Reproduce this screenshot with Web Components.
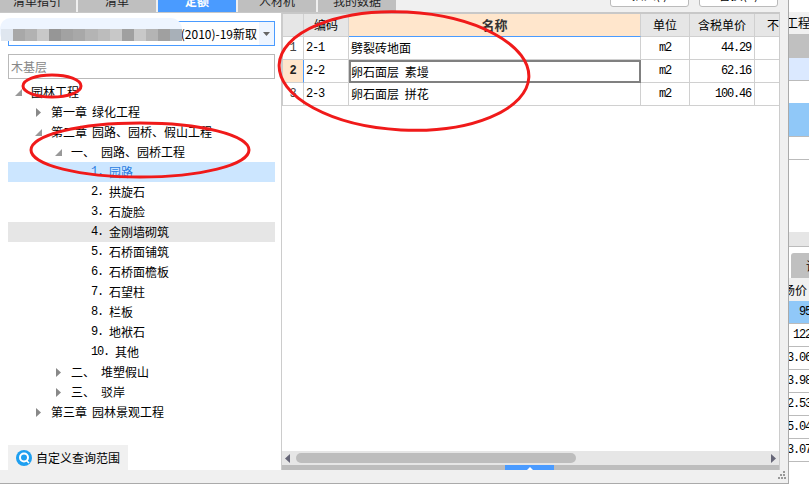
<!DOCTYPE html>
<html lang="zh">
<head>
<meta charset="utf-8">
<title>定额查询</title>
<style>
  html, body { margin: 0; height: 492px; overflow: hidden; background: #fff; }
  body { font: 12px "Noto Sans CJK SC", "Liberation Sans", sans-serif; color: #000; }
</style>
</head>
<body>
<ui-app>
  <ui-topbar slot="top"></ui-topbar>
  <ui-sidebar slot="left">
    <ui-tree-row depth="0" arrow="open">园林工程</ui-tree-row>
    <ui-tree-row depth="1" arrow="closed" num="第一章" w="41">绿化工程</ui-tree-row>
    <ui-tree-row depth="1" arrow="open" num="第二章" w="41">园路、园桥、假山工程</ui-tree-row>
    <ui-tree-row depth="2" arrow="open" num="一、" w="30">园路、园桥工程</ui-tree-row>
    <ui-tree-row depth="3" num="1." w="18" state="selected">园路</ui-tree-row>
    <ui-tree-row depth="3" num="2." w="18">拱旋石</ui-tree-row>
    <ui-tree-row depth="3" num="3." w="18">石旋脸</ui-tree-row>
    <ui-tree-row depth="3" num="4." w="18" state="hover">金刚墙砌筑</ui-tree-row>
    <ui-tree-row depth="3" num="5." w="18">石桥面铺筑</ui-tree-row>
    <ui-tree-row depth="3" num="6." w="18">石桥面檐板</ui-tree-row>
    <ui-tree-row depth="3" num="7." w="18">石望柱</ui-tree-row>
    <ui-tree-row depth="3" num="8." w="18">栏板</ui-tree-row>
    <ui-tree-row depth="3" num="9." w="18">地袱石</ui-tree-row>
    <ui-tree-row depth="3" num="10." w="24">其他</ui-tree-row>
    <ui-tree-row depth="2" arrow="closed" num="二、" w="30">堆塑假山</ui-tree-row>
    <ui-tree-row depth="2" arrow="closed" num="三、" w="30">驳岸</ui-tree-row>
    <ui-tree-row depth="1" arrow="closed" num="第三章" w="41">园林景观工程</ui-tree-row>
  </ui-sidebar>
  <ui-grid slot="right"></ui-grid>
  <ui-sidepanel slot="side"></ui-sidepanel>
</ui-app>
<ui-annotations></ui-annotations>

<script>
const mono = '"Liberation Mono", monospace';

class UiApp extends HTMLElement {
  constructor() {
    super();
    this.attachShadow({mode: 'open'}).innerHTML = `
    <style>
      :host { display: flex; width: 809px; height: 492px; overflow: hidden; }
      .win { width: 789px; height: 484px; display: flex; flex-direction: column; flex: none;
             background: #f0f0f0; border-bottom: 1px solid #aaa; border-right: 1px solid #aaa; box-sizing: border-box; }
      .work { height: 458px; display: flex; flex: none; }
      .status { flex: 1; position: relative; }
      .grip { position: absolute; right: 2px; top: 1px; width: 8px; height: 8px; }
      .side { flex: 1; min-width: 0; }
    </style>
    <div class="win">
      <slot name="top"></slot>
      <div class="work"><slot name="left"></slot><slot name="right"></slot></div>
      <div class="status">
        <svg class="grip" viewBox="0 0 8 8" fill="#999">
          <rect x="5" y="0" width="2" height="2"/><rect x="2" y="3" width="2" height="2"/><rect x="5" y="3" width="2" height="2"/>
          <rect x="0" y="6" width="2" height="2"/><rect x="3" y="6" width="2" height="2"/><rect x="6" y="6" width="2" height="2"/>
        </svg>
      </div>
    </div>
    <div class="side"><slot name="side"></slot></div>`;
  }
}

class UiTopbar extends HTMLElement {
  constructor() {
    super();
    const tabs = ['清单指引', '清单', '定额', '人材机', '我的数据'];
    this.attachShadow({mode: 'open'}).innerHTML = `
    <style>
      :host { display: flex; height: 12px; flex: none; overflow: hidden; align-items: flex-end; background: #f0f0f0; font-size: 12px; }
      .tabs { display: flex; gap: 2px; margin-left: -2px; align-items: flex-end; }
      .tab { width: 78px; height: 21px; line-height: 20px; text-align: center; background: #bfbfbf; color: #222; flex: none; }
      .tab.on { background: #4a9bff; color: #fff; font-weight: bold; }
      .btns { margin-left: auto; margin-right: 10px; display: flex; gap: 10px; align-self: flex-start; }
      .btn { width: 79px; height: 22px; margin-top: -15px; box-sizing: border-box; background: #fff; border: 1px solid #bbb;
             border-radius: 3px; text-align: center; line-height: 18px; font-size: 12px; }
    </style>
    <div class="tabs">${tabs.map((t, i) => `<div class="tab${i == 2 ? ' on' : ''}">${t}</div>`).join('')}</div>
    <div class="btns"><div class="btn">插入(I)</div><div class="btn">替换(R)</div></div>`;
  }
}

class UiSidebar extends HTMLElement {
  constructor() {
    super();
    this.attachShadow({mode: 'open'}).innerHTML = `
    <style>
      :host { display: flex; flex-direction: column; width: 282px; height: 458px; flex: none; box-sizing: border-box;
              background: #fff; border-right: 1px solid #ccc; border-top: 1px solid #c8c8c8; padding: 8px 6px 0 8px; position: relative; }
      .select { height: 25px; box-sizing: border-box; border: 1px solid #4a9bff; display: flex; flex: none; }
      .select .val { flex: 1; text-align: right; line-height: 23px; padding-right: 2px; white-space: nowrap; }
      .select .drop { width: 15px; background: #eef5ff; display: flex; align-items: center; justify-content: center; }
      .search { height: 25px; margin-top: 8px; flex: none; box-sizing: border-box; border: 1px solid #b9b9b9; line-height: 23px; padding-left: 2px; color: #888; }
      .tree { margin-top: 3px; flex: 1; display: flex; flex-direction: column; }
      .query { width: 120px; height: 25px; flex: none; background: #f0f0f0; display: flex; align-items: center; gap: 4px; padding-left: 8px; box-sizing: border-box; }
      .mask { position: absolute; left: 0; top: 5px; width: 182px; height: 23px; background: #eef5ff; border-radius: 11px 12px 12px 8px;
              display: flex; align-items: flex-end; padding-left: 1px; box-sizing: border-box; }
      .mask i { display: block; height: 12px; flex: 1; }
    </style>
    <div class="select"><div class="val">(2010)-19新取</div>
      <div class="drop"><svg width="7" height="4" viewBox="0 0 7 4"><path d="M0 0h7L3.5 4z" fill="#666"/></svg></div></div>
    <div class="search">木基层</div>
    <div class="tree"><slot></slot></div>
    <div class="query">
      <svg width="16" height="16" viewBox="0 0 16 16"><circle cx="8" cy="8" r="8" fill="#1e9ff0"/><circle cx="8" cy="7.5" r="4" fill="none" stroke="#fff" stroke-width="2"/><path d="M10.5 10.5L13 13" stroke="#fff" stroke-width="1.5"/></svg>
      <span>自定义查询范围</span>
    </div>
    <div class="mask">${['#dfe6ef','#a8a8a8','#b2b2b2','#c8c8c8','#969696','#a2a2a2','#a8a8a8','#b4b4b4','#bcbcbc','#c8c8c8','#a0a0a0','#c8c8c8','#b4b4b4','#a0a0a0','#a8b0b8']
      .map(c => `<i style="background:${c}"></i>`).join('')}</div>`;
  }
}

class UiTreeRow extends HTMLElement {
  constructor() {
    super();
    const depth = +this.getAttribute('depth');
    const arrow = this.getAttribute('arrow');
    const num = this.getAttribute('num');
    const w = this.getAttribute('w') || 0;
    const isDigit = num && /^\d/.test(num);
    const icon = arrow == 'open'
      ? '<path d="M7 1v7H0z" fill="#999"/>'
      : arrow == 'closed' ? '<path d="M1 0l5 4.5L1 9z" fill="#888"/>' : '';
    this.attachShadow({mode: 'open'}).innerHTML = `
    <style>
      :host { display: flex; height: 20px; line-height: 20px; flex: none; align-items: center; white-space: nowrap; padding-left: ${7 + depth * 20}px; }
      :host([state=selected]) { background: #cce6ff; color: #2a7de1; }
      :host([state=hover]) { background: #e6e6e6; }
      svg { width: 7px; height: 9px; flex: none; margin-right: 9px; }
      .num { flex: none; width: ${w}px; ${isDigit ? `font: 12px ${mono}; letter-spacing: -1.2px;` : ''} }
    </style>
    <svg viewBox="0 0 7 9">${icon}</svg>${num ? `<span class="num">${num}</span>` : ''}<slot></slot>`;
  }
}

class UiGrid extends HTMLElement {
  constructor() {
    super();
    const rows = [
      ['1', '2-1', '劈裂砖地面', 'm2', '44.29'],
      ['2', '2-2', '卵石面层 素墁', 'm2', '62.16'],
      ['3', '2-3', '卵石面层 拼花', 'm2', '100.46'],
    ];
    const body = rows.map((r, i) => `
      <div class="c num ${i == 1 ? 'cur' : ''}">${r[0]}</div>
      <div class="c code">${r[1]}</div>
      <div class="c name ${i == 1 ? 'edit' : ''}">${r[2]}</div>
      <div class="c mid">${r[3]}</div>
      <div class="c price">${r[4]}</div>
      <div class="c last"></div>`).join('');
    this.attachShadow({mode: 'open'}).innerHTML = `
    <style>
      :host { display: flex; flex-direction: column; width: 497px; flex: none; background: #fff;
              border-top: 2px solid #c8c8c8; height: 456px; border-right: 1px solid #ccc; }
      .view { flex: 1; overflow: hidden; }
      .table { display: grid; grid-template-columns: 21px 45px 292px 49px 65px 24px; grid-auto-rows: 23px; border-left: 1px solid #ccc; width: 496px; }
      .h { background: #e6e6e6; border-right: 1px solid #d0d0d0; border-bottom: 1px solid #d0d0d0; text-align: center; line-height: 22px; overflow: hidden; white-space: nowrap; }
      .h.on { background: #ffe6cc; border-bottom-color: #4a9bff; font-weight: bold; font-size: 13px; color: #333; }
      .h.clip { border-right: 0; text-align: left; padding-left: 12px; }
      .c { border-right: 1px solid #d0d0d0; border-bottom: 1px solid #d0d0d0; line-height: 22px; white-space: pre; box-sizing: border-box; }
      .c.last { border-right: 0; }
      .num { text-align: center; font: 12px/22px ${mono}; color: #444; }
      .num.cur { background: #ffe6cc; color: #222; font-weight: bold; border-right: 1px solid #4a9bff; }
      .code { padding-left: 2px; font: 12px/22px ${mono}; letter-spacing: -1.2px; }
      .name { padding-left: 2px; word-spacing: 3px; }
      .edit { border: 2px solid #808080; line-height: 19px; padding-left: 0; }
      .mid { text-align: center; font: 12px/22px ${mono}; letter-spacing: -1.2px; }
      .price { text-align: right; padding-right: 3px; font: 12px/22px ${mono}; letter-spacing: -1.2px; }
      .bar { height: 14px; background: #e6e6e6; display: flex; align-items: center; padding: 0 3px; flex: none; }
      .thumb { width: 280px; height: 10px; margin-left: 6px; background: #bdbdbd; border-radius: 5px; }
      .bar svg { flex: none; }
      .bar svg:last-child { margin-left: auto; }
      .fold { height: 5px; background: #bdbdbd; flex: none; display: flex; }
      .fold div { width: 49px; margin-left: 223px; background: #4a9bff; display: flex; align-items: flex-end; justify-content: center; }
    </style>
    <div class="view"><div class="table">
      <div class="h"></div><div class="h">编码</div><div class="h on">名称</div><div class="h">单位</div><div class="h">含税单价</div><div class="h clip">不含税</div>
      ${body}
    </div></div>
    <div class="bar">
      <svg width="5" height="9" viewBox="0 0 5 9"><path d="M5 0v9L0 4.5z" fill="#667"/></svg>
      <div class="thumb"></div>
      <svg width="5" height="9" viewBox="0 0 5 9"><path d="M0 0v9l5-4.5z" fill="#667"/></svg>
    </div>
    <div class="fold"><div><svg width="6" height="3" viewBox="0 0 6 3"><path d="M3 0l3 3H0z" fill="#fff"/></svg></div></div>`;
  }
}

class UiSidepanel extends HTMLElement {
  constructor() {
    super();
    const lower = ['95', '122', '3.06', '3.98', '2.53', '5.04', '3.07'];
    this.attachShadow({mode: 'open'}).innerHTML = `
    <style>
      :host { display: flex; flex-direction: column; height: 492px; overflow: hidden; background: #fff; }
      .top { height: 232px; flex: none; display: flex; flex-direction: column; }
      .head { height: 22px; margin-top: 12px; line-height: 22px; background: #f0f0f0; white-space: nowrap; text-indent: -3px; overflow: hidden; flex: none; }
      .r { box-sizing: border-box; border-bottom: 1px solid #bbb; flex: none; }
      .bar { height: 14px; background: #e6e6e6; border-bottom: 1px solid #bbb; flex: none; }
      .tabwrap { height: 31px; flex: none; padding: 6px 0 0 2px; box-sizing: border-box; }
      .tab { height: 25px; background: #c0c0c0; border-radius: 3px 0 0 0; padding-left: 15px; line-height: 25px; white-space: nowrap; overflow: hidden; }
      .lhead { height: 23px; background: #f0f0f0; line-height: 23px; white-space: nowrap; overflow: hidden; flex: none; display: flex; justify-content: flex-end; padding-right: 2px; }
      .v { width: 22px; height: 23px; flex: none; box-sizing: border-box; border-bottom: 1px solid #bbb; font: 12px/22px ${mono}; letter-spacing: -1.2px; white-space: nowrap; overflow: hidden; display: flex; justify-content: flex-end; }
      .v.on { background: #90c8f8; }
    </style>
    <div class="top">
      <div class="head">工程量</div>
      <div class="r" style="height:24px;background:#c0c0c0;border:0"></div>
      <div class="r" style="height:23px;background:#dbe9ff"></div>
      <div class="r" style="height:22px;border:0"></div>
      <div class="r" style="height:34px;background:#90c8f8"></div>
      <div class="r" style="height:23px"></div>
      <div style="flex:1"></div>
    </div>
    <div class="bar"></div>
    <div class="tabwrap"><div class="tab">详</div></div>
    <div class="lhead"><span>场价</span></div>
    ${lower.map((v, i) => `<div class="v${i == 0 ? ' on' : ''}"><span>${v}</span></div>`).join('')}`;
  }
}

class UiAnnotations extends HTMLElement {
  constructor() {
    super();
    this.attachShadow({mode: 'open'}).innerHTML = `
    <style>
      :host { position: absolute; left: 0; top: 0; width: 809px; height: 492px; pointer-events: none; display: block; }
      svg { display: block; }
    </style>
    <svg width="809" height="492" fill="none" stroke="#f01a1a" stroke-width="3">
      <ellipse cx="52" cy="86" rx="29" ry="11"/>
      <ellipse cx="140" cy="150" rx="109" ry="27"/>
      <ellipse cx="404" cy="71" rx="125" ry="59" transform="rotate(3 404 71)"/>
    </svg>`;
  }
}

customElements.define('ui-app', UiApp);
customElements.define('ui-topbar', UiTopbar);
customElements.define('ui-sidebar', UiSidebar);
customElements.define('ui-tree-row', UiTreeRow);
customElements.define('ui-grid', UiGrid);
customElements.define('ui-sidepanel', UiSidepanel);
customElements.define('ui-annotations', UiAnnotations);
</script>
</body>
</html>
